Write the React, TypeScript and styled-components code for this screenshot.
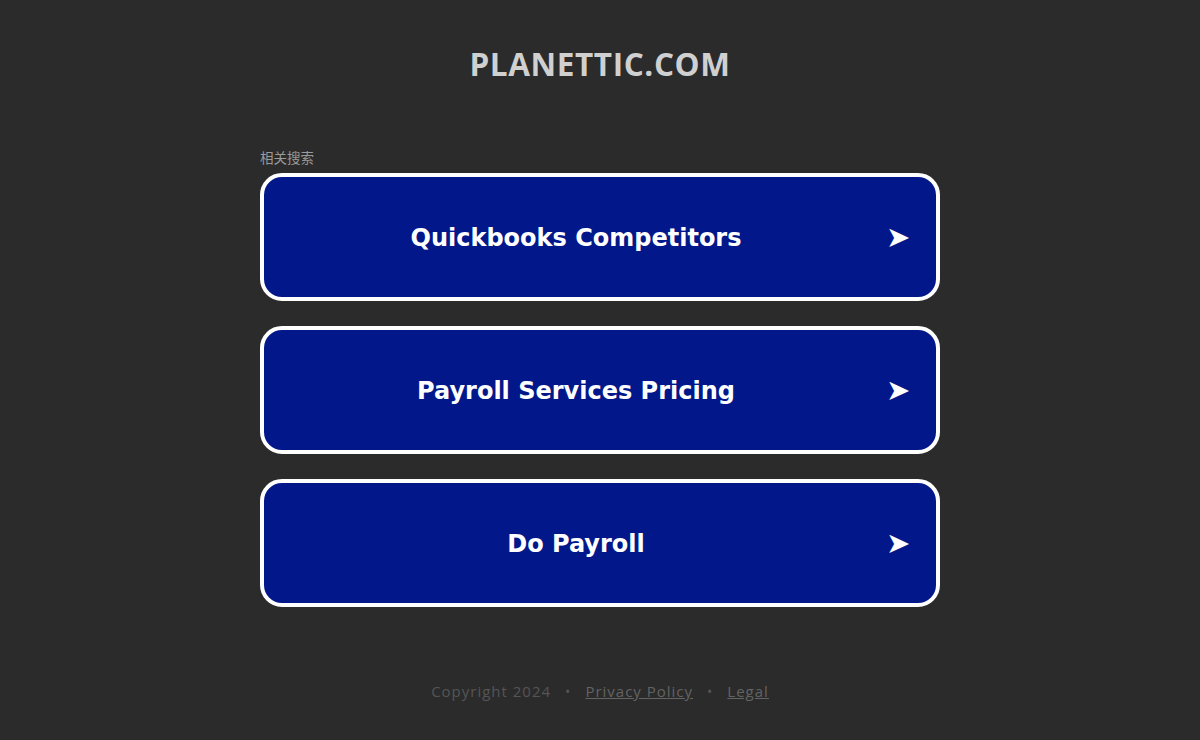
import React from 'react'
import styled, { createGlobalStyle } from 'styled-components'

const GlobalStyle = createGlobalStyle`
  html, body {
    margin: 0;
    padding: 0;
    background: #2b2b2b;
  }
`

const Page = styled.div`
  min-height: 740px;
  display: flex;
  flex-direction: column;
  align-items: center;
  font-family: "Open Sans", "Noto Sans", sans-serif;
`

const Domain = styled.h1`
  margin: 43px 0 0;
  font-family: "Open Sans", "Noto Sans", sans-serif;
  font-size: 31.5px;
  font-weight: 700;
  line-height: 42px;
  letter-spacing: 0.6px;
  color: #d0d0d0;
`

const Related = styled.section`
  width: 680px;
  margin-top: 65px;
  display: flex;
  flex-direction: column;
`

const Label = styled.div`
  font-family: "Noto Sans CJK SC", sans-serif;
  font-size: 13.5px;
  line-height: 15px;
  color: #9a9a9a;
  margin-bottom: 8px;
`

const LinkList = styled.div`
  display: flex;
  flex-direction: column;
  gap: 25px;
`

const LinkBox = styled.a`
  box-sizing: border-box;
  height: 128px;
  display: flex;
  align-items: center;
  padding: 1px 26px 0 24px;
  background: #02188a;
  border: 4px solid #ffffff;
  border-radius: 22px;
  color: #ffffff;
  text-decoration: none;
`

const LinkText = styled.span`
  flex: 1;
  text-align: center;
  font-family: "DejaVu Sans", Verdana, sans-serif;
  font-size: 24px;
  font-weight: 700;
  padding-right: 22px;
`

const Arrow = styled.span`
  font-family: "DejaVu Sans", sans-serif;
  font-size: 29px;
  line-height: 1;
  width: 24px;
  text-align: right;
`

const Footer = styled.footer`
  margin-top: 74px;
  display: flex;
  gap: 14px;
  align-items: center;
  font-family: "Open Sans", "Noto Sans", sans-serif;
  font-size: 15px;
  letter-spacing: 1px;
  color: #555555;
`

const FooterLink = styled.a`
  color: #636363;
  text-decoration: underline;
`

const Dot = styled.span`
  font-size: 14px;
`

const items = ['Quickbooks Competitors', 'Payroll Services Pricing', 'Do Payroll']

const App = () => {
  return (
    <Page>
      <GlobalStyle />
      <Domain>PLANETTIC.COM</Domain>
      <Related>
        <Label>相关搜索</Label>
        <LinkList>
          {items.map((item) => (
            <LinkBox href="#" key={item}>
              <LinkText>{item}</LinkText>
              <Arrow>➤</Arrow>
            </LinkBox>
          ))}
        </LinkList>
      </Related>
      <Footer>
        <span>Copyright 2024</span>
        <Dot>•</Dot>
        <FooterLink href="#">Privacy Policy</FooterLink>
        <Dot>•</Dot>
        <FooterLink href="#">Legal</FooterLink>
      </Footer>
    </Page>
  )
}

export default App
